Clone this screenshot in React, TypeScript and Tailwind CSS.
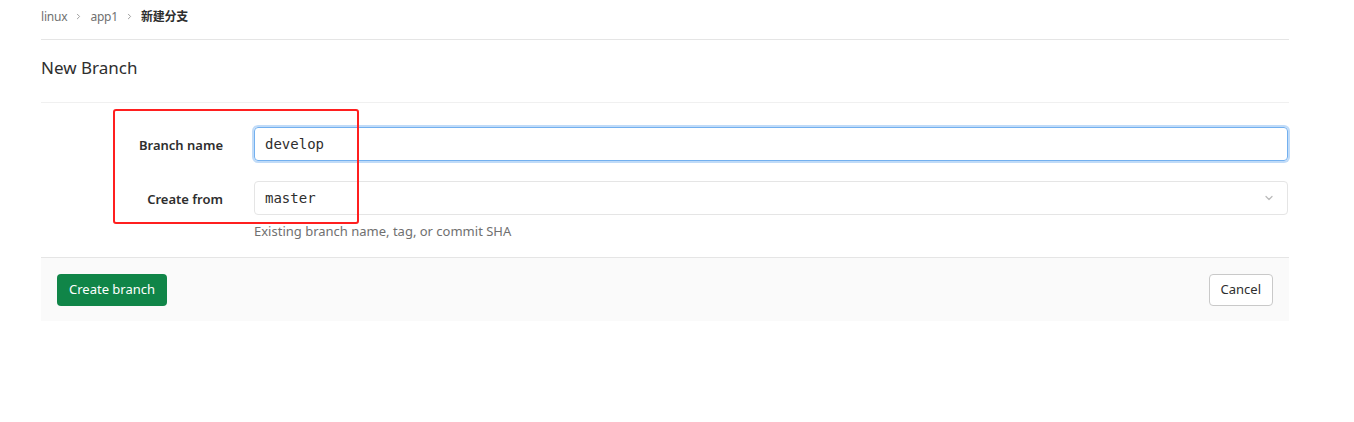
import { ChevronRight, ChevronDown } from "lucide-react";

const sans = "font-['Noto_Sans','Open_Sans',sans-serif]";
const mono = "font-['DejaVu_Sans_Mono',monospace]";

export default function App() {
  return (
    <div className={`min-h-[422px] bg-white text-[#2e2e2e] ${sans}`}>
      <div className="relative ml-[41px] w-[1248px]">
        {/* Breadcrumbs */}
        <nav className="flex h-[40px] items-center gap-[5px] border-b border-[#e5e5e5] pb-[6px] text-[12px] tracking-[-0.2px]">
          <span className="text-[#707070]">linux</span>
          <ChevronRight size={9} strokeWidth={2.5} className="mx-[2px] text-[#999]" />
          <span className="text-[#707070]">app1</span>
          <ChevronRight size={9} strokeWidth={2.5} className="mx-[2px] text-[#999]" />
          <span className="font-bold font-['Noto_Sans','Noto_Sans_CJK_SC',sans-serif] text-[#2e2e2e]">新建分支</span>
        </nav>

        {/* Title */}
        <h3 className="flex h-[63px] items-center border-b border-[#f0f0f0] pb-[6px] text-[17px] font-normal">
          New Branch
        </h3>

        {/* Form */}
        <div className="pt-[24px]">
          <div className="flex items-center">
            <label className="w-[182px] pt-[3px] text-right text-[13px] font-semibold">Branch name</label>
            <input
              readOnly
              value="develop"
              className={`ml-[31px] h-[34px] w-[1034px] rounded-[4px] border border-[#73b0ef] px-[10px] text-[14px] text-[#2e2e2e] shadow-[0_0_0_2px_rgba(115,176,239,0.45)] outline-none ${mono}`}
            />
          </div>
          <div className="mt-[20px] flex items-center">
            <label className="w-[182px] pt-[3px] text-right text-[13px] font-semibold">Create from</label>
            <div className="ml-[31px] flex h-[34px] w-[1034px] items-center justify-between rounded-[4px] border border-[#e5e5e5] pl-[10px] pr-[12px]">
              <span className={`text-[14px] ${mono}`}>master</span>
              <ChevronDown size={12} strokeWidth={2.5} className="text-[#bbb]" />
            </div>
          </div>
          <p className="ml-[213px] mt-[7px] text-[13px] text-[#707070]">
            Existing branch name, tag, or commit SHA
          </p>
        </div>

        {/* Footer */}
        <div className="mt-[15px] flex h-[64px] items-start justify-between border-t border-[#e5e5e5] bg-[#fafafa] px-[16px] pt-[16px]">
          <button className="h-[32px] rounded-[4px] bg-[#108548] px-[12px] text-[13px] text-white">
            Create branch
          </button>
          <button className="h-[32px] rounded-[4px] border border-[#c9c9c9] bg-white px-[11px] text-[13px] text-[#2e2e2e]">
            Cancel
          </button>
        </div>

        {/* Annotation box */}
        <div className="pointer-events-none absolute left-[72px] top-[109px] h-[115px] w-[246px] rounded-[3px] border-2 border-[#ff1f1f]" />
      </div>
    </div>
  );
}
